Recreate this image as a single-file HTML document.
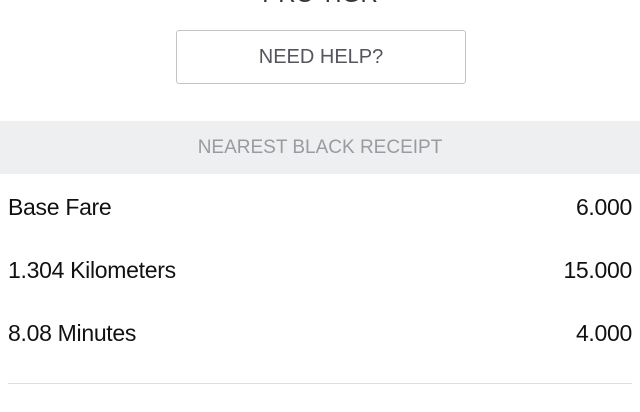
<!DOCTYPE html>
<html><head><meta charset="utf-8"><style>
html,body{margin:0;padding:0;background:#fff;width:640px;height:412px;overflow:hidden;position:relative;font-family:"Liberation Sans",sans-serif;}
.top{position:absolute;top:-19px;left:0;width:640px;text-align:center;font-size:24px;color:#333;}
.btn{position:absolute;left:176px;top:30px;width:288px;height:52px;border:1px solid #c4c4c8;border-radius:3px;text-align:center;line-height:52px;font-size:20px;color:#55555d;}
.band{position:absolute;left:0;top:121px;width:640px;height:53px;background:#eeeff1;text-align:center;line-height:53px;font-size:19px;color:#9a9ba0;}
.row{position:absolute;left:8px;width:624px;font-size:23px;color:#111;height:30px;line-height:30px;letter-spacing:-0.3px;}
.row span{position:absolute;right:0;}
.line{position:absolute;left:8px;top:383px;width:624px;height:1px;background:#dedede;}
</style></head><body>
<div class="top">PRO TIGR</div>
<div class="btn">NEED HELP?</div>
<div class="band">NEAREST BLACK RECEIPT</div>
<div class="row" style="top:192px">Base Fare<span>6.000</span></div>
<div class="row" style="top:255px">1.304 Kilometers<span>15.000</span></div>
<div class="row" style="top:318px">8.08 Minutes<span>4.000</span></div>
<div class="line"></div>
</body></html>
